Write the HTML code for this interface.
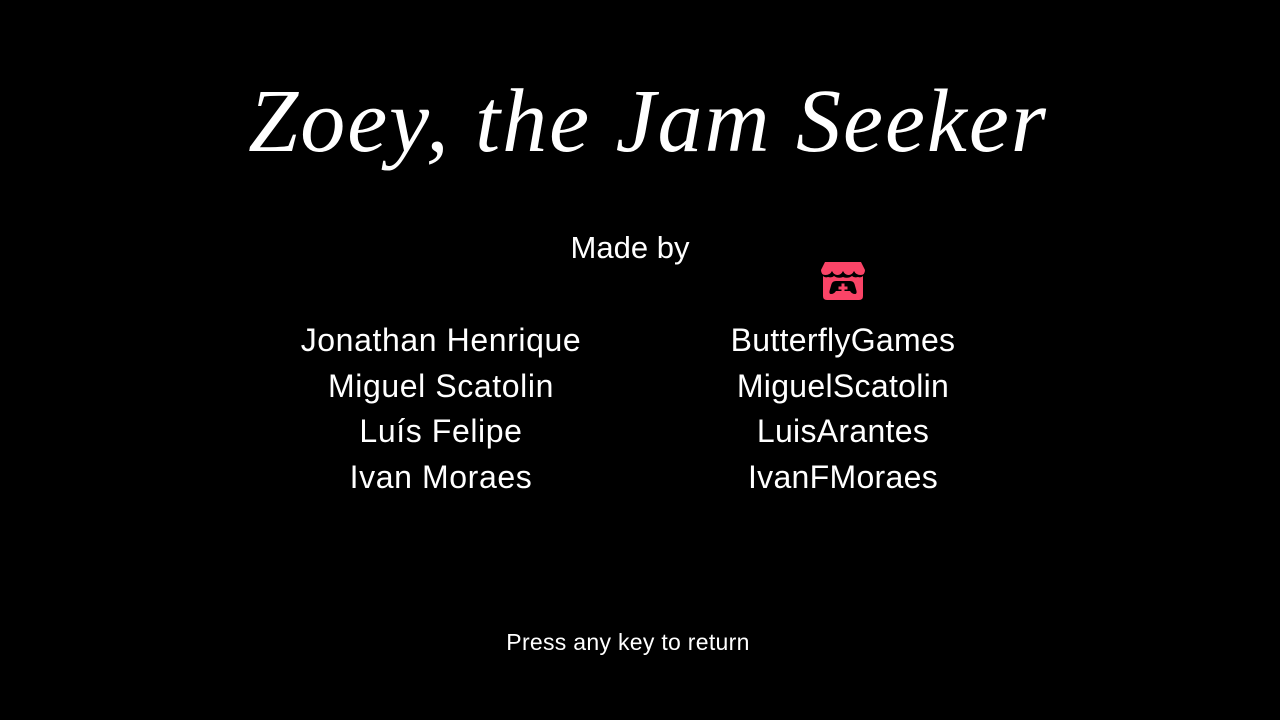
<!DOCTYPE html>
<html><head><meta charset="utf-8"><style>
html,body{margin:0;padding:0;background:#000;width:1280px;height:720px;overflow:hidden;color:#fff;font-family:"Liberation Sans",sans-serif}
.t{position:absolute;white-space:nowrap;transform:translateX(-50%)}
</style></head><body>
<div class="t" style="left:648px;top:62px;font-family:'Liberation Serif',serif;font-style:italic;font-size:90px;line-height:120px;letter-spacing:2px">Zoey, the Jam Seeker</div>
<div class="t" style="left:630px;top:229px;font-size:31px;line-height:38px">Made by</div>
<svg style="position:absolute;left:821px;top:262px" width="44" height="38" viewBox="0 0 44 38">
<path d="M4 0H40L44 8Q44 13 39.5 13Q35 13 33 9Q31 13 27.5 13Q24 13 22 9Q20 13 16.5 13Q13 13 11 9Q9 13 4.5 13Q0 13 0 8Z" fill="#fa4467"/>
<path d="M2 14Q4 16 7 15Q11 16 13 14Q17 17 22 15Q27 17 31 14Q33 16 37 15Q40 16 42 14V34Q42 38 38 38H6Q2 38 2 34Z" fill="#fa4467"/>
<path d="M10 32Q8 32 8.5 29L10.5 22Q11.5 19 15 19H29Q32.5 19 33.5 22L35.5 29Q36 32 34 32Q31 32 29 29H15Q13 32 10 32Z" fill="#000"/>
<path d="M20.5 21.5h3v3h3v3h-3v3h-3v-3h-3v-3h3z" fill="#fa4467"/>
</svg>
<div class="t" style="left:441px;top:318px;font-size:32px;line-height:45.5px;text-align:center;letter-spacing:0.6px">Jonathan Henrique<br>Miguel Scatolin<br>Luís Felipe<br>Ivan Moraes</div>
<div class="t" style="left:843px;top:318px;font-size:32px;line-height:45.5px;text-align:center;letter-spacing:0.3px">ButterflyGames<br>MiguelScatolin<br>LuisArantes<br>IvanFMoraes</div>
<div class="t" style="left:628px;top:627px;font-size:23px;line-height:30px;letter-spacing:0.3px">Press any key to return</div>
</body></html>
